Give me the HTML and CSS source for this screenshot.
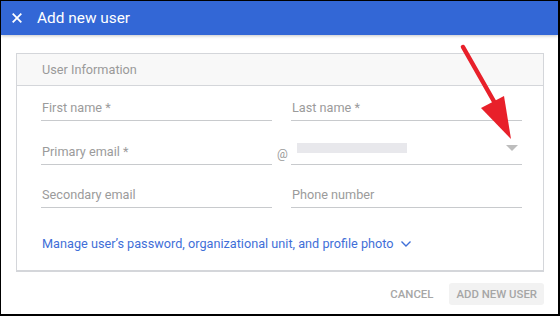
FILE: index.html
```html
<!DOCTYPE html>
<html lang="en">
<head>
    <meta charset="UTF-8">
    <meta name="viewport" content="width=device-width, initial-scale=1.0">
    <title>Add new user</title>
    <link rel="stylesheet" href="styles.css">
</head>
<body>
    <div class="dialog">
        <div class="topbar">
            <svg class="close" width="10" height="10" viewBox="0 0 10 10">
                <path d="M0.7 0.7 L9.3 9.3 M9.3 0.7 L0.7 9.3" stroke="#fff" stroke-width="1.8" fill="none"/>
            </svg>
            <span class="title">Add new user</span>
        </div>

        <div class="card">
            <div class="card-head">User Information</div>
            <div class="card-body">
                <div class="fields">
                    <div class="field">First name *</div>
                    <div class="field">Last name *</div>
                    <div class="field">Primary email *</div>
                    <div class="field field-domain">
                        <span class="at">@</span>
                        <span class="domain"></span>
                        <span class="caret"></span>
                    </div>
                    <div class="field">Secondary email</div>
                    <div class="field">Phone number</div>
                </div>
                <div class="more">
                    Manage user’s password, organizational unit, and profile photo
                    <svg width="12" height="8" viewBox="0 0 12 8">
                        <path d="M1.5 1.5 L6 6 L10.5 1.5" stroke="#3f6fd8" stroke-width="1.4" fill="none"/>
                    </svg>
                </div>
            </div>
        </div>

        <div class="actions">
            <button class="btn">CANCEL</button>
            <button class="btn btn-primary">ADD NEW USER</button>
        </div>

        <!-- annotation arrow -->
        <svg class="arrow" width="560" height="316" viewBox="0 0 560 316">
            <line x1="463" y1="47" x2="500" y2="112" stroke="#e8202a" stroke-width="4.5" stroke-linecap="round"/>
            <polygon points="481,108 504,96 511,139" fill="#e8202a"/>
        </svg>
    </div>
</body>
</html>
```

FILE: styles.css
```css
html, body {
    margin: 0;
    padding: 0;
}
body {
    background: #000;
    width: 560px;
    height: 316px;
    overflow: hidden;
    font-family: Roboto, "Liberation Sans", Arial, sans-serif;
}
.dialog {
    margin: 1px 2px 0 1px;
    height: 313px;
    background: #fff;
    display: flex;
    flex-direction: column;
}
.topbar {
    height: 34px;
    background: #3367d6;
    display: flex;
    align-items: center;
    padding-left: 11px;
    box-shadow: 0 1px 3px rgba(0, 0, 0, 0.22);
    position: relative;
    z-index: 1;
}
.close {
    margin-right: 15px;
}
.title {
    color: #fff;
    font-size: 15.4px;
}
.card {
    margin: 18px 14px 0 15px;
    border: 1px solid #d4d6da;
    border-bottom-width: 2px;
}
.card-head {
    height: 31px;
    background: #f8f8f8;
    border-bottom: 1px solid #d4d6da;
    display: flex;
    align-items: center;
    padding-left: 25px;
    font-size: 12.7px;
    color: #9a9a9a;
}
.card-body {
    padding: 0 19px 0 24px;
}
.fields {
    display: grid;
    grid-template-columns: 231px 231px;
    column-gap: 19px;
    row-gap: 8.5px;
}
.field {
    border-bottom: 1px solid #c8cacd;
    display: flex;
    align-items: flex-end;
    padding-bottom: 5px;
    box-sizing: border-box;
    height: 35px;
    font-size: 12.7px;
    line-height: 15px;
    color: #9b9b9b;
    padding-left: 1px;
}
.field-domain {
    position: relative;
    align-items: center;
    padding-bottom: 0;
    padding-top: 3px;
}
.at {
    position: absolute;
    left: -14px;
    bottom: 2px;
    font-size: 12px;
    color: #9b9b9b;
}
.domain {
    width: 110px;
    height: 10px;
    margin-left: 5px;
    background: #e8e8ec;
}
.caret {
    margin-left: auto;
    margin-right: 4px;
    width: 0;
    height: 0;
    border-left: 6px solid transparent;
    border-right: 6px solid transparent;
    border-top: 6px solid #bdbdbd;
}
.more {
    display: flex;
    align-items: center;
    gap: 6px;
    margin-top: 28px;
    padding-left: 1px;
    height: 15px;
    margin-bottom: 19px;
    font-size: 12.7px;
    color: #3f6fd8;
}
.actions {
    display: flex;
    justify-content: flex-end;
    align-items: center;
    gap: 9px;
    margin: 11px 14px 0 0;
}
.btn {
    font-family: Roboto, "Liberation Sans", Arial, sans-serif;
    font-size: 11.4px;
    font-weight: 500;
    color: #a6a6a6;
    background: none;
    border: none;
    border-radius: 3px;
    height: 22px;
    padding: 0 7px;
}
.btn-primary {
    background: #f2f2f2;
}
.arrow {
    position: absolute;
    left: 0;
    top: 0;
    z-index: 2;
}
```
